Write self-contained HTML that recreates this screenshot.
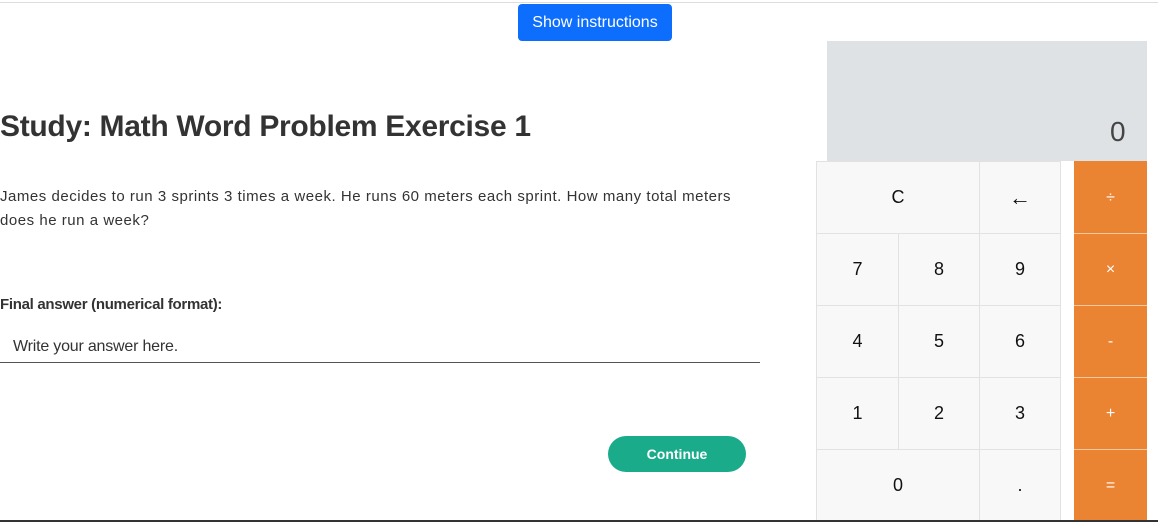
<!DOCTYPE html>
<html><head><style>
body{margin:0;width:1158px;height:522px;position:relative;overflow:hidden;background:#fff;font-family:"Liberation Sans",sans-serif;}
.a{position:absolute}
.k{position:absolute;background:#f8f8f8;border:1px solid #e2e2e2;box-sizing:border-box;display:flex;align-items:center;justify-content:center;font-size:18px;color:#111}
.o{position:absolute;background:#ea8332;box-shadow:inset 0 -1px 0 #f6c9a2;box-sizing:border-box;display:flex;align-items:center;justify-content:center;font-size:16px;color:#fff}
</style></head><body>
<div class="a" style="left:0;top:2px;width:1158px;height:1px;background:#ddd"></div>
<div class="a" style="left:518px;top:4px;width:154px;height:37px;background:#0d6efd;border-radius:4px;color:#fff;font-size:16px;display:flex;align-items:center;justify-content:center">Show instructions</div>
<div class="a" style="left:0;top:110px;font-size:30px;font-weight:bold;color:#333;letter-spacing:-0.3px">Study: Math Word Problem Exercise 1</div>
<div class="a" style="left:0;top:185px;width:742px;font-size:15px;line-height:24px;color:#333;letter-spacing:0.53px">James decides to run 3 sprints 3 times a week. He runs 60 meters each sprint. How many total meters does he run a week?</div>
<div class="a" style="left:0;top:296px;font-size:15px;font-weight:bold;color:#333;letter-spacing:-0.3px">Final answer (numerical format):</div>
<div class="a" style="left:13px;top:338px;font-size:16px;color:#333;letter-spacing:-0.2px">Write your answer here.</div>
<div class="a" style="left:0;top:362px;width:760px;height:1px;background:#555"></div>
<div class="a" style="left:608px;top:436px;width:138px;height:36px;background:#1aab8a;border-radius:18px;color:#fff;font-size:14px;font-weight:bold;display:flex;align-items:center;justify-content:center">Continue</div>
<div class="a" style="left:827px;top:41px;width:320px;height:120px;background:#dfe2e5"></div>
<div class="a" style="left:1110px;top:116px;font-size:28px;color:#444">0</div>
<div class="k" style="left:816px;top:161px;width:164px;height:73px">C</div>
<div class="k" style="left:979px;top:161px;width:82px;height:73px;font-size:22px">←</div>
<div class="k" style="left:816px;top:233px;width:83px;height:73px">7</div>
<div class="k" style="left:898px;top:233px;width:82px;height:73px">8</div>
<div class="k" style="left:979px;top:233px;width:82px;height:73px">9</div>
<div class="k" style="left:816px;top:305px;width:83px;height:73px">4</div>
<div class="k" style="left:898px;top:305px;width:82px;height:73px">5</div>
<div class="k" style="left:979px;top:305px;width:82px;height:73px">6</div>
<div class="k" style="left:816px;top:377px;width:83px;height:73px">1</div>
<div class="k" style="left:898px;top:377px;width:82px;height:73px">2</div>
<div class="k" style="left:979px;top:377px;width:82px;height:73px">3</div>
<div class="k" style="left:816px;top:449px;width:164px;height:73px">0</div>
<div class="k" style="left:979px;top:449px;width:82px;height:73px">.</div>
<div class="a" style="left:1061px;top:161px;width:13px;height:361px;background:#fff"></div>
<div class="o" style="left:1074px;top:161px;width:73px;height:73px">÷</div>
<div class="o" style="left:1074px;top:234px;width:73px;height:72px">×</div>
<div class="o" style="left:1074px;top:306px;width:73px;height:72px">-</div>
<div class="o" style="left:1074px;top:378px;width:73px;height:72px">+</div>
<div class="o" style="left:1074px;top:450px;width:73px;height:72px">=</div>
<div class="a" style="left:0;top:520px;width:1158px;height:2px;background:#333"></div>
</body></html>
